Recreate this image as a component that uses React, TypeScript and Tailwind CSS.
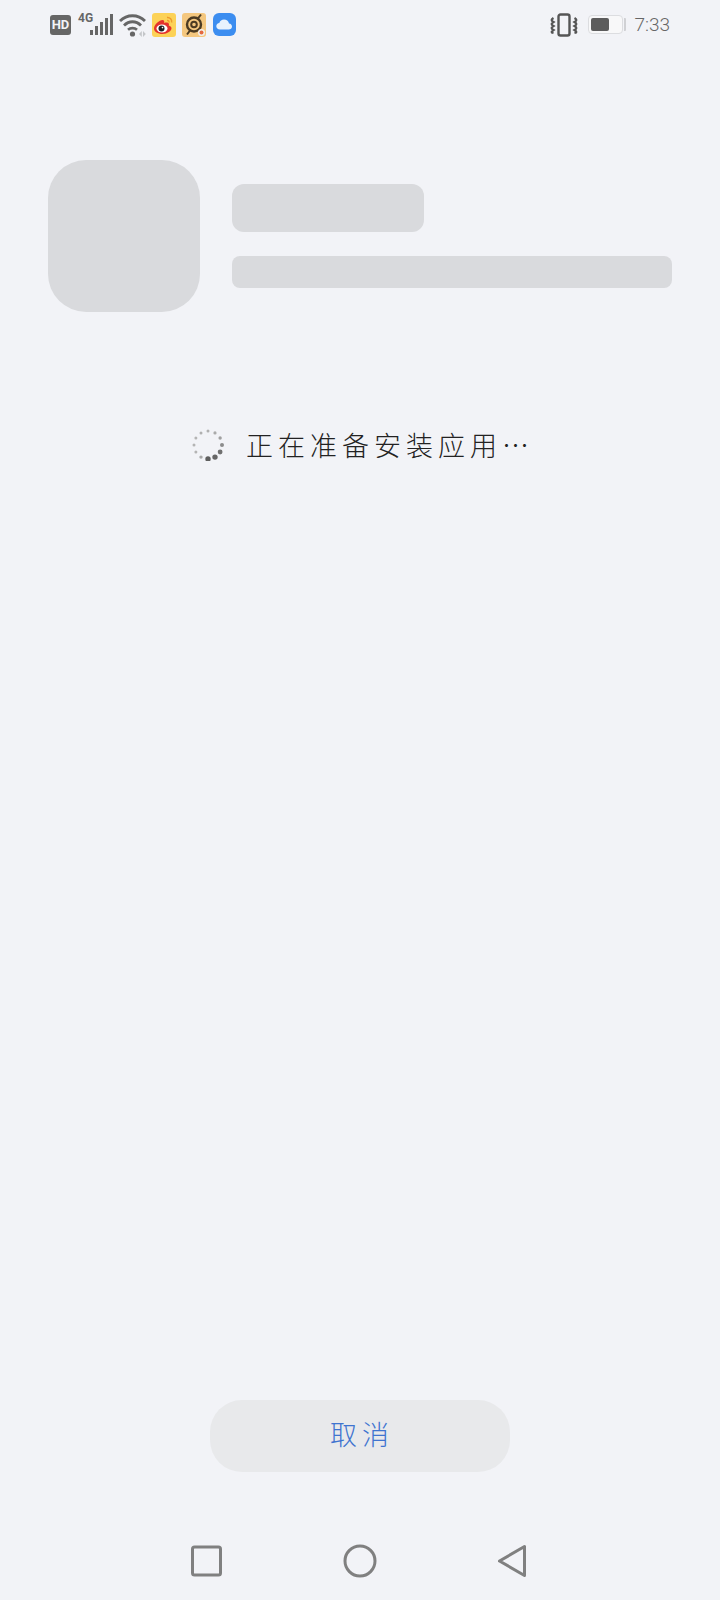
const SPINNER_DOTS = [
  { r: 2.7, color: "#5f5f5f" },
  { r: 2.7, color: "#666666" },
  { r: 2.4, color: "#707070" },
  { r: 2, color: "#8c8c8c" },
  { r: 1.7, color: "#a0a0a0" },
  { r: 1.6, color: "#aaaaaa" },
  { r: 1.5, color: "#b0b0b0" },
  { r: 1.5, color: "#b0b0b0" },
  { r: 1.5, color: "#b4b4b4" },
  { r: 1.5, color: "#b4b4b4" },
  { r: 1.5, color: "#b4b4b4" },
  { r: 1.7, color: "#a8a8a8" },
];

function Spinner() {
  return (
    <svg width="32" height="32" viewBox="0 0 32 32">
      {SPINNER_DOTS.map((dot, i) => {
        const angle = (i * 30 * Math.PI) / 180;
        return (
          <circle
            key={i}
            cx={16 + 14 * Math.sin(angle)}
            cy={16 + 14 * Math.cos(angle)}
            r={dot.r}
            fill={dot.color}
          />
        );
      })}
    </svg>
  );
}

function SignalIcon() {
  return (
    <div className="relative h-[22px] w-[36px] shrink-0">
      <span className="absolute left-0 top-[-2px] text-[12px] font-bold leading-[12px] text-[#666]">4G</span>
      <svg width="36" height="22" viewBox="0 0 36 22" className="absolute inset-0">
        <rect x="12" y="16" width="3" height="5" fill="#666" />
        <rect x="17" y="12" width="3" height="9" fill="#666" />
        <rect x="22" y="8" width="3" height="13" fill="#666" />
        <rect x="27" y="4" width="3" height="17" fill="#666" />
        <rect x="32" y="0" width="3" height="21" fill="#666" />
      </svg>
    </div>
  );
}

function WifiIcon() {
  return (
    <svg width="30" height="24" viewBox="0 0 30 24" fill="none" className="shrink-0">
      <path d="M1 8C8 1 19 1 26 8" stroke="#666" strokeWidth="2.800" />
      <path d="M5 12.500C10 7.500 17 7.500 22 12.500" stroke="#666" strokeWidth="2.800" />
      <path d="M9 16.800C11.500 14.500 15.500 14.500 18 16.800" stroke="#666" strokeWidth="2.600" />
      <circle cx="13.500" cy="21" r="2.600" fill="#666" />
      <path d="M20 21l2.800-3v6zM24 18l2.800 3-2.800 3z" fill="#c4c6c9" />
    </svg>
  );
}

function WeiboIcon() {
  return (
    <svg width="24" height="24" viewBox="0 0 24 24" className="shrink-0">
      <rect width="24" height="24" rx="3" fill="#fcd257" />
      <path d="M15 4.500c3-.4 5.200 2 4.600 5" stroke="#ee9a2b" strokeWidth="1.400" fill="none" />
      <path d="M15 7.500c1.400-.2 2.300.8 2 2.200" stroke="#ee9a2b" strokeWidth="1.300" fill="none" />
      <path d="M2 15.500c0-4 5.500-8.500 8.500-8.500 1.800 0 2 1.500 1.600 2.900 2-.8 4.900-.6 4.900 1.300 0 .6-.2 1-.3 1.300 1.500.4 2.800 1.300 2.800 2.800 0 2.500-4 5.700-9 5.700-4.500 0-8.500-2.300-8.500-5.500z" fill="#e4332c" />
      <ellipse cx="10" cy="15.500" rx="5.500" ry="4" fill="#fff" />
      <circle cx="9.500" cy="15.500" r="3" fill="#222" />
      <circle cx="10.500" cy="14.600" r=".8" fill="#fff" />
    </svg>
  );
}

function TargetAppIcon() {
  return (
    <svg width="24" height="24" viewBox="0 0 24 24" fill="none" className="shrink-0">
      <rect width="24" height="24" rx="3" fill="#f4c77f" />
      <circle cx="12" cy="11.500" r="7" stroke="#4b3a22" strokeWidth="2.400" />
      <circle cx="12" cy="11.500" r="2.800" stroke="#4b3a22" strokeWidth="2" />
      <path d="M19 1.500l-3.500 4.500M5 21.500l3-4" stroke="#4b3a22" strokeWidth="2" />
      <circle cx="19.500" cy="19.500" r="3.500" fill="#f3f0ea" />
      <circle cx="19.500" cy="19.500" r="2" fill="#e4683f" />
    </svg>
  );
}

function CloudAppIcon() {
  return (
    <svg width="23" height="23" viewBox="0 0 23 23" className="shrink-0">
      <rect width="23" height="23" rx="6" fill="#3c8df0" />
      <path d="M7 16.500c-2.200 0-3.700-1.500-3.700-3.300 0-1.700 1.300-3 3-3.200.6-2.200 2.500-3.500 4.700-3.500 2.500 0 4.500 1.600 5 3.900 1.800.2 3 1.400 3 3 0 1.800-1.400 3.100-3.300 3.100z" fill="#e8f2fd" />
    </svg>
  );
}

function VibrateIcon() {
  return (
    <svg width="30" height="24" viewBox="0 0 30 24" fill="none" className="shrink-0">
      <rect x="9.500" y="1.500" width="11" height="21" rx="2" stroke="#555" strokeWidth="2.400" />
      <path d="M4.500 5C2 6.500 2 7.500 4.500 9C2 10.500 2 11.500 4.500 13C2 14.500 2 15.500 4.500 17C2 18.500 2 19.500 4.500 20" stroke="#555" strokeWidth="2.200" />
      <path d="M25.500 5C28 6.500 28 7.500 25.500 9C28 10.500 28 11.500 25.500 13C28 14.500 28 15.500 25.500 17C28 18.500 28 19.500 25.500 20" stroke="#555" strokeWidth="2.200" />
    </svg>
  );
}

function BatteryIcon() {
  return (
    <div className="flex shrink-0 items-center gap-[1px]">
      <div className="h-[19px] w-[35px] rounded-[4px] border border-[#dcdde0] bg-[#f8f8f9] p-[2px]">
        <div className="h-full w-[18px] rounded-[2px] bg-[#5c5c5c]" />
      </div>
      <div className="h-[13px] w-[2px] rounded-r-[1px] bg-[#d0d1d4]" />
    </div>
  );
}

function StatusBar() {
  return (
    <div className="flex h-[48px] items-center justify-between pl-[50px] pr-[50px] pt-[1px]">
      <div className="flex items-center">
        <div className="flex h-[20px] w-[21px] items-center justify-center rounded-[3px] bg-[#666] text-[13px] font-bold leading-none text-[#f2f3f7]">
          HD
        </div>
        <div className="ml-[7px]">
          <SignalIcon />
        </div>
        <div className="ml-[5px]">
          <WifiIcon />
        </div>
        <div className="ml-[3px]">
          <WeiboIcon />
        </div>
        <div className="ml-[6px]">
          <TargetAppIcon />
        </div>
        <div className="ml-[7px]">
          <CloudAppIcon />
        </div>
      </div>
      <div className="flex items-center">
        <VibrateIcon />
        <div className="ml-[9px]">
          <BatteryIcon />
        </div>
        <span className="ml-[8px] font-['Roboto',sans-serif] text-[19px] font-light leading-none text-[#666]">
          7:33
        </span>
      </div>
    </div>
  );
}

function NavBar() {
  return (
    <div className="flex items-center justify-center gap-[120px] pb-[22px] pr-[2px]">
      <svg width="32" height="32" viewBox="0 0 32 32" fill="none">
        <rect x="1.500" y="2" width="28" height="28" rx="2" stroke="#808080" strokeWidth="3" />
      </svg>
      <svg width="34" height="34" viewBox="0 0 34 34" fill="none">
        <circle cx="17" cy="17" r="15" stroke="#808080" strokeWidth="3" />
      </svg>
      <svg width="30" height="34" viewBox="0 0 30 34" fill="none">
        <path d="M27.500 2.500V31.500L2.500 17Z" stroke="#808080" strokeWidth="3" strokeLinejoin="round" />
      </svg>
    </div>
  );
}

export default function App() {
  return (
    <div className="flex h-[1600px] w-[720px] flex-col overflow-hidden bg-[#f2f3f7] font-['Roboto','Noto_Sans_CJK_SC',sans-serif]">
      <StatusBar />

      <div className="mt-[112px] flex items-center gap-[32px] px-[48px]">
        <div className="h-[152px] w-[152px] shrink-0 rounded-[38px] bg-[#d9dadd]" />
        <div className="flex flex-1 flex-col gap-[24px]">
          <div className="h-[48px] w-[192px] rounded-[12px] bg-[#d9dadd]" />
          <div className="h-[32px] w-full rounded-[8px] bg-[#d9dadd]" />
        </div>
      </div>

      <div className="mt-[113px] flex h-[40px] items-center justify-center gap-[22px] pl-[6px]">
        <Spinner />
        <span className="-mt-[2px] font-['Noto_Sans_CJK_SC',sans-serif] text-[27px] font-light leading-none tracking-[5px] text-[#222]">
          正在准备安装应用…
        </span>
      </div>

      <div className="flex-1" />

      <div className="flex justify-center">
        <button className="h-[72px] w-[300px] rounded-[32px] bg-[#e8e9eb] pb-[4px] pl-[4px] font-['Noto_Sans_CJK_SC',sans-serif] text-[27px] font-light tracking-[5px] text-[#3f74d0]">
          取消
        </button>
      </div>

      <div className="mt-[72px]">
        <NavBar />
      </div>
    </div>
  );
}
